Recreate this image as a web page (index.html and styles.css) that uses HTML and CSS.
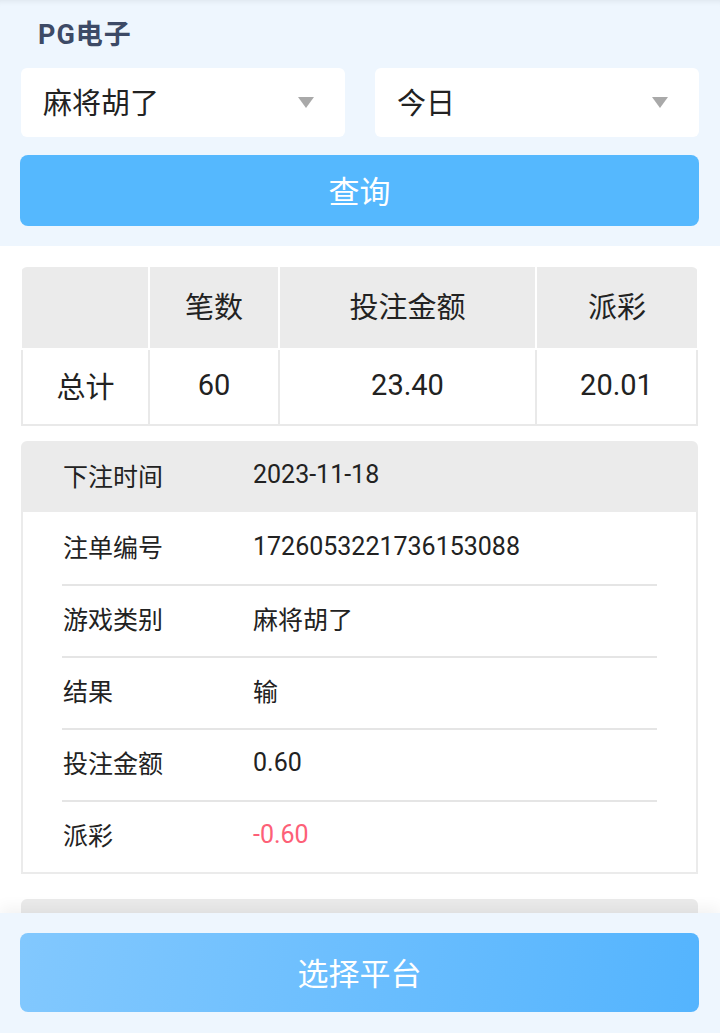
FILE: index.html
```html
<!DOCTYPE html>
<html lang="zh-CN">
<head>
    <meta charset="UTF-8">
    <meta name="viewport" content="width=device-width, initial-scale=1.0">
    <link rel="stylesheet" href="styles.css">
</head>
<body>
    <div class="filter">
        <div class="filter-title">PG电子</div>
        <div class="select-row">
            <div class="select"><span>麻将胡了</span><i class="caret"></i></div>
            <div class="select"><span>今日</span><i class="caret"></i></div>
        </div>
        <button class="btn-query">查询</button>
    </div>

    <div class="content">
        <div class="summary">
            <table>
                <colgroup>
                    <col style="width: 127px">
                    <col style="width: 130px">
                    <col style="width: 257px">
                    <col>
                </colgroup>
                <thead>
                    <tr><th></th><th>笔数</th><th>投注金额</th><th>派彩</th></tr>
                </thead>
                <tbody>
                    <tr><td>总计</td><td>60</td><td>23.40</td><td>20.01</td></tr>
                </tbody>
            </table>
        </div>

        <div class="record">
            <div class="record-head">
                <span class="label">下注时间</span>
                <span class="value">2023-11-18</span>
            </div>
            <div class="record-row">
                <span class="label">注单编号</span>
                <span class="value">1726053221736153088</span>
            </div>
            <div class="record-row">
                <span class="label">游戏类别</span>
                <span class="value">麻将胡了</span>
            </div>
            <div class="record-row">
                <span class="label">结果</span>
                <span class="value">输</span>
            </div>
            <div class="record-row">
                <span class="label">投注金额</span>
                <span class="value">0.60</span>
            </div>
            <div class="record-row">
                <span class="label">派彩</span>
                <span class="value loss">-0.60</span>
            </div>
        </div>

        <div class="record">
            <div class="record-head"></div>
        </div>
    </div>

    <div class="footer">
        <button class="btn-platform">选择平台</button>
    </div>
</body>
</html>
```

FILE: styles.css
```css
body {
    margin: 0;
    background-color: #fff;
    font-family: Roboto, "Noto Sans CJK SC", sans-serif;
    color: #222;
}

.filter {
    background-color: #eef6fe;
    padding: 18px 21px 20px 20px;
    box-shadow: inset 0 7px 6px -6px rgba(0, 0, 0, 0.08);
}

.filter-title {
    font-size: 27px;
    font-weight: bold;
    letter-spacing: 1px;
    color: #3d4a66;
    line-height: 34px;
    padding-left: 18px;
    margin-bottom: 16px;
}

.select-row {
    display: grid;
    grid-template-columns: 1fr 1fr;
    gap: 30px;
    margin-left: 1px;
}

.select {
    height: 69px;
    box-sizing: border-box;
    background-color: #fff;
    border-radius: 6px;
    display: flex;
    align-items: center;
    justify-content: space-between;
    padding: 0 31px 3px 22px;
    font-size: 29px;
    color: #222;
}

.caret {
    width: 0;
    height: 0;
    margin-top: 3px;
    border-left: 8px solid transparent;
    border-right: 8px solid transparent;
    border-top: 11px solid #a9a9a9;
}

.btn-query {
    display: block;
    width: 100%;
    height: 71px;
    margin-top: 18px;
    padding-bottom: 4px;
    border: none;
    border-radius: 8px;
    background-color: #55b8fe;
    color: #fff;
    font-family: inherit;
    font-size: 31px;
}

.content {
    padding: 21px 22px 140px 21px;
}

.summary {
    border-radius: 6px 6px 0 0;
    overflow: hidden;
}

table {
    width: 100%;
    border-collapse: collapse;
    table-layout: fixed;
    font-size: 29px;
    text-align: center;
}

th {
    height: 76px;
    background-color: #ebebeb;
    font-weight: normal;
    border: 2px solid #fff;
    border-top: none;
    padding: 0 0 5px;
}

th:first-child {
    border-left: none;
}

th:last-child {
    border-right: none;
}

td {
    height: 69px;
    border: 2px solid #e9e9e9;
    padding: 0 0 5px;
}

.record {
    margin-top: 15px;
    border: 2px solid #ebebeb;
    border-radius: 6px 6px 0 0;
    font-size: 25px;
}

.record + .record {
    margin-top: 25px;
}

.record-head {
    display: flex;
    align-items: center;
    box-sizing: border-box;
    height: 69px;
    background-color: #ebebeb;
    padding: 0 0 6px 40px;
}

.record-row {
    display: flex;
    align-items: center;
    box-sizing: border-box;
    height: 72px;
    margin: 0 39px;
    padding-bottom: 6px;
    border-top: 2px solid #e5e5e5;
}

.record-head + .record-row {
    border-top-color: transparent;
}

.label {
    width: 190px;
    flex-shrink: 0;
}

.record-row .label {
    padding-left: 1px;
}

.loss {
    color: #fd6077;
}

.footer {
    position: fixed;
    left: 0;
    right: 0;
    bottom: 0;
    background-color: #eef6fe;
    padding: 20px 21px 21px 20px;
    box-shadow: 0 -6px 14px rgba(0, 0, 0, 0.05);
}

.btn-platform {
    display: block;
    width: 100%;
    height: 79px;
    padding-bottom: 4px;
    border: none;
    border-radius: 8px;
    background: linear-gradient(100deg, #82c8fe, #54b4fe);
    color: #fff;
    font-family: inherit;
    font-size: 31px;
}
```
